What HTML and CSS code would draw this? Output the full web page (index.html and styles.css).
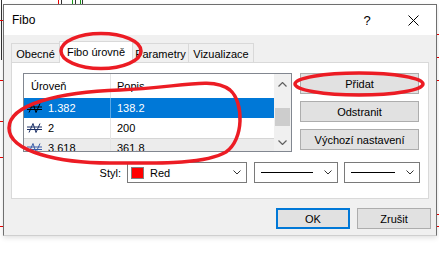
FILE: index.html
```html
<!DOCTYPE html>
<html lang="cs">
<head>
    <meta charset="UTF-8" />
    <title>Fibo</title>
    <link rel="stylesheet" href="styles.css">
</head>
<body>
    <div class="chart">
        <span class="mark dark" style="left:1px; top:0; height:60px;"></span>
        <span class="mark red" style="left:58px; top:0; height:4px;"></span>
        <span class="mark dark" style="left:61px; top:0; height:4px;"></span>
        <span class="mark green" style="left:72px; top:0; height:4px;"></span>
        <span class="mark dark" style="left:75px; top:0; height:4px;"></span>
        <span class="mark green" style="left:80px; top:0; height:4px;"></span>
        <span class="mark dark" style="left:82px; top:0; height:4px;"></span>
        <span class="tick" style="left:0; top:20px;"></span>
        <span class="tick" style="left:0; top:80px;"></span>
        <span class="tick" style="left:0; top:121px;"></span>
        <span class="tick" style="left:0; top:157px;"></span>
        <span class="tick" style="left:0; top:226px;"></span>
        <span class="tick" style="left:437px; top:34px;"></span>
        <span class="tick" style="left:437px; top:57px;"></span>
        <span class="tick" style="left:437px; top:80px;"></span>
        <span class="tick" style="left:437px; top:214px;"></span>
        <span class="tick" style="left:437px; top:226px;"></span>
    </div>

    <div class="dialog">
        <div class="titlebar">
            <span class="title">Fibo</span>
            <span class="tb-btn help">?</span>
            <span class="tb-btn">
                <svg width="11" height="11" viewBox="0 0 11 11"><path d="M0.5 0.5 L10.5 10.5 M10.5 0.5 L0.5 10.5" stroke="#000" stroke-width="1" fill="none"/></svg>
            </span>
        </div>
        <div class="content">
            <div class="tabs">
                <div class="tab t-obecne">Obecné</div>
                <div class="tab t-fibo active">Fibo úrovně</div>
                <div class="tab t-param">Parametry</div>
                <div class="tab t-viz">Vizualizace</div>
            </div>
            <div class="panel">
                <div class="top-row">
                    <div class="list">
                        <div class="list-main">
                            <div class="row head">
                                <div class="c1">Úroveň</div>
                                <div class="c2">Popis</div>
                            </div>
                            <div class="row selected">
                                <div class="c1">
                                    <svg class="lvl-icon" width="16" height="10" viewBox="0 0 16 10"><path d="M0 4 H15 M0 6.5 H15 M2 9.5 L6 0.5 L9 9.5 L13 0.5" stroke="#000" stroke-width="1" fill="none"/></svg>
                                    1.382
                                </div>
                                <div class="c2">138.2</div>
                            </div>
                            <div class="row">
                                <div class="c1">
                                    <svg class="lvl-icon" width="16" height="10" viewBox="0 0 16 10"><path d="M0 4 H15 M0 6.5 H15 M2 9.5 L6 0.5 L9 9.5 L13 0.5" stroke="#1b2f66" stroke-width="1" fill="none"/></svg>
                                    2
                                </div>
                                <div class="c2">200</div>
                            </div>
                            <div class="row alt">
                                <div class="c1">
                                    <svg class="lvl-icon" width="16" height="10" viewBox="0 0 16 10"><path d="M0 4 H15 M0 6.5 H15 M2 9.5 L6 0.5 L9 9.5 L13 0.5" stroke="#3a5ca8" stroke-width="1" fill="none"/></svg>
                                    3.618
                                </div>
                                <div class="c2">361.8</div>
                            </div>
                        </div>
                        <div class="scrollbar">
                            <div class="sb-btn sb-up">
                                <svg width="9" height="5" viewBox="0 0 9 5"><path d="M0.5 4.5 L4.5 0.5 L8.5 4.5" stroke="#606060" stroke-width="1.2" fill="none"/></svg>
                            </div>
                            <div class="sb-thumb"></div>
                            <div class="sb-btn sb-down">
                                <svg width="9" height="5" viewBox="0 0 9 5"><path d="M0.5 0.5 L4.5 4.5 L8.5 0.5" stroke="#606060" stroke-width="1.2" fill="none"/></svg>
                            </div>
                        </div>
                    </div>
                    <div class="side">
                        <button class="btn">Přidat</button>
                        <button class="btn">Odstranit</button>
                        <button class="btn">Výchozí nastavení</button>
                    </div>
                </div>
                <div class="style-row">
                    <span class="styl-label">Styl:</span>
                    <div class="combo combo-color">
                        <span class="swatch"></span>
                        <span class="combo-text">Red</span>
                        <svg class="chev" width="8" height="5" viewBox="0 0 8 5"><path d="M0.5 0.5 L4 4 L7.5 0.5" stroke="#333" stroke-width="1" fill="none"/></svg>
                    </div>
                    <div class="combo combo-line">
                        <span class="line-sample"></span>
                        <svg class="chev" width="8" height="5" viewBox="0 0 8 5"><path d="M0.5 0.5 L4 4 L7.5 0.5" stroke="#333" stroke-width="1" fill="none"/></svg>
                    </div>
                    <div class="combo combo-width">
                        <span class="line-sample"></span>
                        <svg class="chev" width="8" height="5" viewBox="0 0 8 5"><path d="M0.5 0.5 L4 4 L7.5 0.5" stroke="#333" stroke-width="1" fill="none"/></svg>
                    </div>
                </div>
            </div>
            <div class="footer">
                <button class="btn btn-default">OK</button>
                <button class="btn">Zrušit</button>
            </div>
        </div>
    </div>

    <svg class="annotations" width="439" height="254" viewBox="0 0 439 254">
        <ellipse cx="101" cy="51" rx="40" ry="17.5" />
        <ellipse cx="359" cy="84" rx="64" ry="11" />
        <path d="M9 128 C9 104 60 92 120 90 C178 88 212 76 230 90 C244 102 244 140 226 152 C204 165 150 163 110 163 C60 163 9 152 9 128 Z" />
    </svg>
</body>
</html>
```

FILE: styles.css
```css
body {
    margin: 0;
    width: 439px;
    height: 254px;
    background-color: #fff;
    position: relative;
    overflow: hidden;
    font-family: 'Liberation Sans', Arial, sans-serif;
    font-size: 11px;
    color: #000;
}

.chart .mark {
    position: absolute;
    width: 1px;
}
.mark.dark { background-color: #333; }
.mark.red { background-color: #e00; }
.mark.green { background-color: #1a9a1a; }
.chart .tick {
    position: absolute;
    width: 3px;
    height: 1px;
    background-color: #e00;
}

.dialog {
    margin: 4px 0 0 3px;
    width: 434px;
    height: 232px;
    box-sizing: border-box;
    border: 1px solid #6f6f6f;
    border-bottom-color: #cfcfcf;
    background-color: #f0f0f0;
    display: flex;
    flex-direction: column;
    position: relative;
    box-shadow: 0 2px 5px rgba(0, 0, 0, 0.12);
}

.titlebar {
    height: 30px;
    flex-shrink: 0;
    background-color: #fff;
    display: flex;
    align-items: center;
}
.title {
    margin-left: 8px;
    margin-right: auto;
    font-size: 12px;
}
.tb-btn {
    width: 46px;
    height: 30px;
    display: flex;
    align-items: center;
    justify-content: center;
}
.help {
    font-size: 13px;
}

.content {
    flex: 1;
    padding: 6px 7px 0 7px;
    display: flex;
    flex-direction: column;
}

/* tabs */
.tabs {
    display: flex;
    align-items: flex-end;
    height: 22px;
    margin-bottom: -1px;
}
.tab {
    height: 19px;
    box-sizing: border-box;
    border: 1px solid #d9d9d9;
    border-bottom: none;
    margin-bottom: 1px;
    background-color: #f0f0f0;
    display: flex;
    align-items: center;
    justify-content: center;
    padding-top: 1px;
}
.tab.active {
    height: 22px;
    margin-bottom: 0;
    background-color: #fff;
    position: relative;
    z-index: 1;
    padding-top: 0;
    padding-bottom: 1px;
}
.t-obecne { width: 49px; }
.t-fibo { width: 74px; margin-left: -1px; }
.t-param { width: 57px; margin-left: -1px; }
.t-viz { width: 66px; margin-left: -1px; }

.panel {
    height: 137px;
    box-sizing: border-box;
    border: 1px solid #d9d9d9;
    background-color: #fff;
    padding: 10px 0 0 11px;
}

.top-row {
    display: flex;
    height: 79px;
}

/* list */
.list {
    width: 269px;
    height: 79px;
    box-sizing: border-box;
    border: 1px solid #828790;
    display: flex;
    overflow: hidden;
    flex-shrink: 0;
}
.list-main {
    flex: 1;
    overflow: hidden;
}
.row {
    display: flex;
    height: 20px;
}
.row.head {
    height: 24px;
}
.c1 {
    width: 87px;
    box-sizing: border-box;
    border-right: 1px solid #e5e5e5;
    display: flex;
    align-items: center;
    padding-left: 3px;
    flex-shrink: 0;
}
.c2 {
    display: flex;
    align-items: center;
    padding-left: 6px;
}
.head .c1 {
    padding-left: 7px;
}
.lvl-icon {
    margin-right: 5px;
}
.row.selected {
    background-color: #0078d7;
    color: #fff;
}
.row.selected .c1 {
    border-right-color: rgba(255, 255, 255, 0.35);
}
.row.alt {
    background-color: #ececec;
    box-shadow: inset 0 1px 0 #d5d5d5;
}

.scrollbar {
    width: 17px;
    background-color: #f0f0f0;
    display: flex;
    flex-direction: column;
}
.sb-btn {
    display: flex;
    align-items: center;
    justify-content: center;
}
.sb-up {
    height: 20px;
}
.sb-down {
    height: 17px;
    margin-top: auto;
}
.sb-thumb {
    margin: 14px 1px 0 1px;
    height: 18px;
    background-color: #cdcdcd;
}

/* buttons */
.side {
    margin-left: 8px;
    width: 119px;
    display: flex;
    flex-direction: column;
    gap: 7px;
    flex-shrink: 0;
}
.btn {
    height: 21px;
    box-sizing: border-box;
    border: 1px solid #adadad;
    background-color: #e1e1e1;
    font-family: inherit;
    font-size: 11px;
    color: #000;
    padding: 0;
    display: flex;
    align-items: center;
    justify-content: center;
}
.btn-default {
    border: 2px solid #0078d7;
}

/* style row */
.style-row {
    display: flex;
    align-items: center;
    margin-top: 10px;
    height: 21px;
}
.style-row > * {
    flex-shrink: 0;
}
.styl-label {
    width: 22px;
    margin-left: 76px;
    text-align: right;
}
.combo {
    height: 21px;
    box-sizing: border-box;
    border: 1px solid #7a7a7a;
    background-color: #fff;
    display: flex;
    align-items: center;
    padding: 0 5px 0 6px;
}
.combo-color {
    width: 120px;
    margin-left: 6px;
    padding-left: 3px;
}
.combo-line {
    width: 84px;
    margin-left: 7px;
}
.combo-width {
    width: 76px;
    margin-left: 6px;
}
.swatch {
    width: 13px;
    height: 12px;
    box-sizing: border-box;
    border: 1px solid #808080;
    background-color: #f00;
}
.combo-text {
    margin-left: 6px;
}
.line-sample {
    height: 1px;
    background-color: #000;
}
.combo-line .line-sample { width: 52px; }
.combo-width .line-sample { width: 44px; }
.chev {
    margin-left: auto;
}

.footer {
    display: flex;
    justify-content: flex-end;
    gap: 7px;
    margin-top: 9px;
    margin-right: -2px;
}
.footer .btn {
    width: 74px;
}

.annotations {
    position: absolute;
    left: 0;
    top: 0;
    z-index: 10;
    pointer-events: none;
}
.annotations ellipse, .annotations path {
    fill: none;
    stroke: #ec1c24;
    stroke-width: 3.5;
}
```
